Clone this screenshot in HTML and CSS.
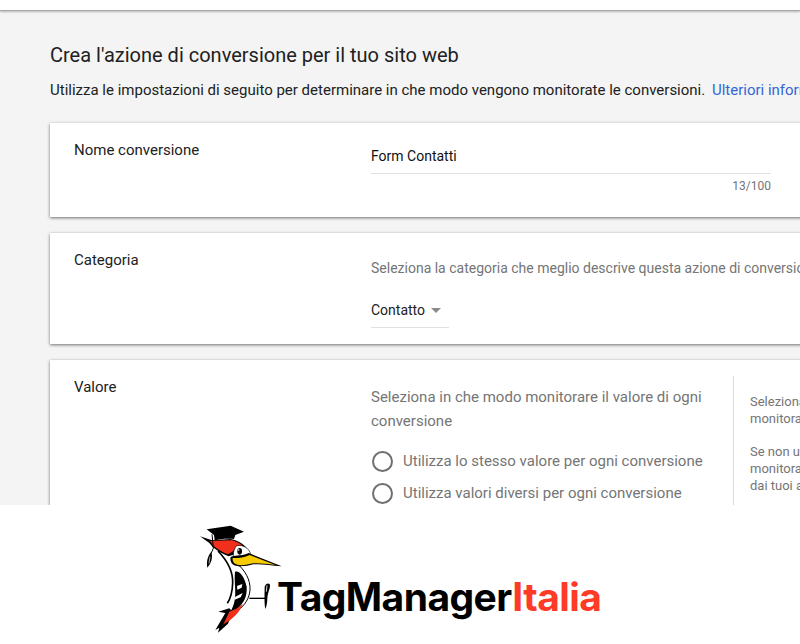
FILE: index.html
```html
<!DOCTYPE html>
<html lang="it">
<head>
  <meta charset="UTF-8" />
  <title>Crea l'azione di conversione</title>
  <link rel="stylesheet" href="styles.css">
</head>
<body>
  <div class="topbar"></div>

  <main class="content">
    <h1>Crea l'azione di conversione per il tuo sito web</h1>
    <p class="intro">Utilizza le impostazioni di seguito per determinare in che modo vengono monitorate le conversioni. <a href="#">Ulteriori informazioni</a></p>

    <section class="card card-name">
      <div class="card-label">Nome conversione</div>
      <div class="card-body">
        <div class="field">Form Contatti</div>
        <div class="counter">13/100</div>
      </div>
    </section>

    <section class="card card-category">
      <div class="card-label">Categoria</div>
      <div class="card-body">
        <p class="hint">Seleziona la categoria che meglio descrive questa azione di conversione</p>
        <div class="select">Contatto <span class="caret"></span></div>
      </div>
    </section>

    <section class="card card-value">
      <div class="card-label">Valore</div>
      <div class="card-body">
        <p class="hint value-hint">Seleziona in che modo monitorare il valore di ogni conversione</p>
        <div class="radio"><span class="radio-dot"></span>Utilizza lo stesso valore per ogni conversione</div>
        <div class="radio"><span class="radio-dot"></span>Utilizza valori diversi per ogni conversione</div>
      </div>
      <aside class="help">
        <p>Seleziona in che modo vuoi<br>monitorare il valore</p>
        <p>Se non utilizzi un valore puoi<br>monitorare le conversioni generate<br>dai tuoi annunci</p>
      </aside>
    </section>
  </main>

  <footer class="brand">
    <svg class="bird" width="90" height="125" viewBox="0 0 270 375" overflow="visible">
      <!-- neck and belly -->
      <path d="M84 108 C110 135 130 165 128 205 C127 235 122 250 112 265" fill="none" stroke="#000" stroke-width="5"/>
      <path d="M140 145 C165 165 182 195 180 225 C178 250 165 270 145 285" fill="none" stroke="#000" stroke-width="3"/>
      <!-- wing -->
      <path d="M135 170 C150 165 165 190 170 215 C172 245 160 265 145 278 L105 316 C120 295 132 275 135 250 C138 225 132 195 135 170 Z" fill="#000"/>
      <path d="M141 213 L157 207 L155 218 L142 224 Z M136 245 L158 234 L152 247 L134 254 Z" fill="#fff"/>
      <!-- tail -->
      <path d="M118 280 L85 290 L106 294 L76 345 L88 338 L84 353 L114 326 L128 290 Z" fill="#000"/>
      <path d="M158 268 C150 290 130 312 100 328 L118 290 C132 286 146 278 158 268 Z" fill="#f0301c"/>
      <!-- crest -->
      <path d="M30 64 L66 76 L122 72 C148 78 166 90 172 104 L135 118 L116 124 C100 118 82 108 68 96 L58 84 Z" fill="#000"/>
      <path d="M60 78 L126 76 C146 82 158 90 164 100 L136 104 L114 118 C98 112 82 102 70 92 Z" fill="#f0301c"/>
      <!-- head -->
      <path d="M140 92 C160 88 178 100 182 118 L164 128 L132 134 C128 118 130 104 140 92 Z" fill="#fff" stroke="#000" stroke-width="2"/>
      <ellipse cx="149" cy="109" rx="7" ry="10" fill="#000"/>
      <circle cx="146" cy="105" r="2.5" fill="#fff"/>
      <!-- beak and chin -->
      <path d="M122 126 C130 120 150 125 176 114 L275 154 C240 150 210 146 190 148 C170 154 140 158 128 148 C122 142 120 134 122 126 Z" fill="#000"/>
      <path d="M128 129 C140 130 162 128 179 120 L256 150 C225 146 200 143 182 146 C165 151 143 153 133 145 C129 141 127 135 128 129 Z" fill="#f6cb00"/>
      <!-- mortarboard -->
      <path d="M50 43 L122 32 L162 50 L136 60 L132 72 C110 70 90 72 74 76 L72 60 Z" fill="#000"/>
      <!-- tassel -->
      <path d="M66 58 L70 100 L62 118" fill="none" stroke="#000" stroke-width="3"/>
      <path d="M63 112 C70 125 64 145 52 158 C48 140 54 122 63 112 Z" fill="#000"/>
      <path d="M60 125 L57 145" stroke="#fff" stroke-width="2"/>
      <!-- foot and perch -->
      <path d="M178 250 L226 250" fill="none" stroke="#000" stroke-width="4"/>
      <path d="M226 282 C222 262 224 232 224 215 C228 203 240 202 240 212 C240 222 233 232 232 250 C232 262 230 274 226 282 Z" fill="#000"/>
      <path d="M231 211 L229 230" stroke="#fff" stroke-width="2.5"/>
    </svg>
    <div class="wordmark">TagManager<span class="wordmark-red">Italia</span></div>
  </footer>
</body>
</html>
```

FILE: styles.css
```css
* { box-sizing: border-box; margin: 0; padding: 0; }
html, body { height: 644px; overflow: hidden; }
body {
  width: 800px;
  background: #fff;
  font-family: 'Roboto', sans-serif;
  color: #212121;
}
.topbar {
  position: relative;
  height: 11px;
  background: #fff;
  border-bottom: 1px solid #a8a8a8;
  box-shadow: 0 1px 2px rgba(0,0,0,0.25);
}
.content {
  height: 494px;
  background: #f4f4f4;
  padding: 32px 0 0 50px;
  overflow: hidden;
  white-space: nowrap;
}
h1 {
  font-size: 20px;
  font-weight: 400;
  line-height: 24px;
}
.intro {
  margin-top: 13px;
  font-size: 15px;
  line-height: 20px;
  margin-bottom: 23px;
}
.intro a { color: #3367d6; text-decoration: none; margin-left: 3px; }
.card {
  display: flex;
  width: 900px;
  background: #fff;
  box-shadow: 0 1px 3px rgba(0,0,0,0.55);
  margin-bottom: 16px;
  padding-left: 24px;
}
.card-label {
  width: 297px;
  flex: none;
  font-size: 15px;
  line-height: 20px;
}
.card-name { height: 94px; padding-top: 17px; }
.card-category { height: 111px; padding-top: 17px; }
.card-value { height: 200px; padding-top: 17px; }
.card-body { width: 400px; flex: none; }
.field {
  height: 34px;
  padding-top: 7px;
  border-bottom: 1px solid #e0e0e0;
  font-size: 14px;
  line-height: 18px;
  color: #111;
}
.counter {
  margin-top: 5px;
  text-align: right;
  font-size: 12px;
  line-height: 14px;
  color: #757575;
}
.hint {
  font-size: 15px;
  line-height: 24px;
  color: #757575;
}
.card-category .hint { margin-top: 6px; font-size: 14px; }
.select {
  display: flex;
  align-items: center;
  width: 78px;
  height: 35px;
  margin-top: 13px;
  border-bottom: 1px solid #e0e0e0;
  font-size: 14px;
  color: #212121;
}
.caret {
  margin-left: 6px;
  border-left: 5.5px solid transparent;
  border-right: 5.5px solid transparent;
  border-top: 5px solid #8a8a8a;
}
.card-value .card-body { width: 362px; }
.value-hint {
  width: 345px;
  margin-top: 8px;
  white-space: normal;
  margin-bottom: 12px;
}
.radio {
  display: flex;
  align-items: center;
  height: 32px;
  font-size: 15px;
  color: #757575;
}
.radio-dot {
  width: 21px;
  height: 21px;
  margin: 1px 10px 0 1px;
  border: 2px solid #6f6f6f;
  border-radius: 50%;
}
.help {
  width: 300px;
  height: 130px;
  margin-top: -1px;
  border-left: 1px solid #dcdcdc;
  padding: 17px 0 0 16px;
  font-size: 13px;
  line-height: 17px;
  color: #757575;
}
.help p { margin-bottom: 16px; }
.brand {
  display: flex;
  align-items: flex-start;
  height: 139px;
  padding: 10px 0 0 190px;
  background: #fff;
}
.bird { flex: none; }
.wordmark {
  margin-top: 59px;
  margin-left: -3px;
  font-family: 'Inter', sans-serif;
  font-size: 39px;
  font-weight: 700;
  line-height: 46px;
  letter-spacing: -0.55px;
  color: #000;
}
.wordmark-red { color: #ff3b28; }
```
